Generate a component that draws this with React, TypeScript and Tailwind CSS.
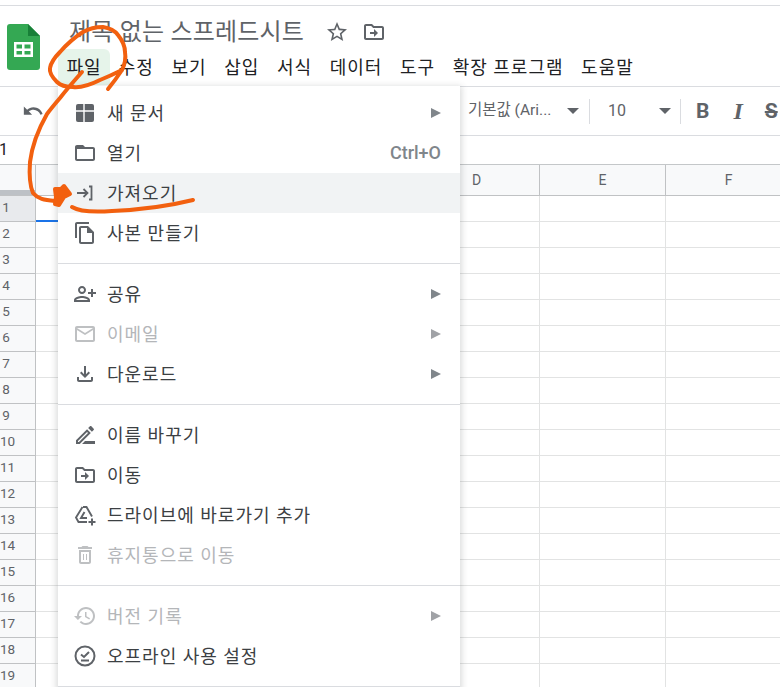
const FONT = "font-['Roboto','Noto_Sans_CJK_KR',sans-serif]";

function I({ d, className = "", size = 24, flip = false }: { d: string; className?: string; size?: number; flip?: boolean }) {
  return (
    <svg width={size} height={size} viewBox="0 0 24 24" fill="currentColor" className={className}>
      <path d={d} transform={flip ? "matrix(-1 0 0 1 24 0)" : undefined} />
    </svg>
  );
}

const P = {
  folder: "M20 6h-8l-2-2H4c-1.1 0-1.99.9-1.99 2L2 18c0 1.1.9 2 2 2h16c1.1 0 2-.9 2-2V8c0-1.1-.9-2-2-2zm0 12H4V8h16v10z",
  copy: "M16 1H4c-1.1 0-2 .9-2 2v14h2V3h12V1zm-1 4H8c-1.1 0-1.99.9-1.99 2L6 21c0 1.1.89 2 1.99 2H19c1.1 0 2-.9 2-2V11l-6-6zM8 21V7h6v5h5v9H8z",
  person: "M15 12c2.21 0 4-1.79 4-4s-1.79-4-4-4-4 1.79-4 4 1.79 4 4 4zm0-6c1.1 0 2 .9 2 2s-.9 2-2 2-2-.9-2-2 .9-2 2-2zm0 8c-2.67 0-8 1.34-8 4v2h16v-2c0-2.66-5.33-4-8-4zm-6 4c.22-.72 3.31-2 6-2 2.7 0 5.8 1.29 6 2H9zm-3-3v-3h3v-2H6V7H4v3H1v2h3v3h2z",
  mail: "M22 6c0-1.1-.9-2-2-2H4c-1.1 0-2 .9-2 2v12c0 1.1.9 2 2 2h16c1.1 0 2-.9 2-2V6zm-2 0l-8 5-8-5h16zm0 12H4V8l8 5 8-5v10z",
  download: "M18 15v3H6v-3H4v3c0 1.1.9 2 2 2h12c1.1 0 2-.9 2-2v-3h-2zm-1-4l-1.41-1.41L13 12.17V4h-2v8.17L8.41 9.59 7 11l5 5 5-5z",
  pencil: "M14.06 9.02l.92.92L5.92 19H5v-.92l9.06-9.06M17.66 3c-.25 0-.51.1-.7.29l-1.83 1.83 3.75 3.75 1.83-1.83c.39-.39.39-1.02 0-1.41l-2.34-2.34c-.2-.2-.45-.29-.71-.29zm-3.6 3.19L3 17.25V21h3.75L17.81 9.94l-3.75-3.75zM12 18h10v3H9z",
  move: "M20 6h-8l-2-2H4c-1.1 0-1.99.9-1.99 2L2 18c0 1.1.9 2 2 2h16c1.1 0 2-.9 2-2V8c0-1.1-.9-2-2-2zm0 12H4V6h5.17l2 2H20v10zm-8-4H8v-2h4V9l4 4-4 4v-3z",
  star: "M22 9.24l-7.19-.62L12 2 9.19 8.63 2 9.24l5.46 4.73L5.82 21 12 17.27 18.18 21l-1.63-7.03L22 9.24zM12 15.4l-3.76 2.27 1-4.28-3.32-2.88 4.38-.38L12 6.1l1.71 4.04 4.38.38-3.32 2.88 1 4.28L12 15.4z",
  trash: "M6 19c0 1.1.9 2 2 2h8c1.1 0 2-.9 2-2V7H6v12zM8 9h8v10H8V9zm7.5-5l-1-1h-5l-1 1H5v2h14V4zM10 11h1v6h-1zM13 11h1v6h-1z",
  history: "M13 3c-4.97 0-9 4.03-9 9H1l3.89 3.89.07.14L9 12H6c0-3.87 3.13-7 7-7s7 3.13 7 7-3.13 7-7 7c-1.93 0-3.68-.79-4.94-2.06l-1.42 1.42C8.27 19.99 10.51 21 13 21c4.97 0 9-4.03 9-9s-4.03-9-9-9zm-1 5v5l4.28 2.54.72-1.21-3.5-2.08V8H12z",
  undo: "M12.5 8c-2.65 0-5.05.99-6.9 2.6L2 7v9h9l-3.62-3.62c1.39-1.16 3.16-1.88 5.12-1.88 3.54 0 6.55 2.31 7.6 5.5l2.37-.78C21.08 11.03 17.15 8 12.5 8z",
};

function NewIcon() {
  return (
    <svg width={24} height={24} viewBox="0 0 24 24">
      <rect x="3" y="3" width="18" height="18" rx="2" fill="#5f6368" />
      <path d="M3 10h18M11 3v18" stroke="#fff" strokeWidth="1.4" fill="none" />
    </svg>
  );
}
function ImportIcon() {
  return (
    <svg width={24} height={24} viewBox="0 0 24 24" fill="none" stroke="#5f6368" strokeWidth="1.8">
      <path d="M4 12h10M10.5 8l4 4-4 4M16 5.500h2.500v13H16" />
    </svg>
  );
}
function ShortcutIcon() {
  return (
    <svg width={24} height={24} viewBox="0 0 24 24" fill="none" stroke="#5f6368" strokeWidth="1.9">
      <path d="M10 4h3.500L19 13.500M9.500 4 3 14.500 5.500 19H14" />
      <path d="M11.500 9 8 15h6" />
      <path d="M19 15.500v7M15.500 19h7" strokeWidth="2" />
    </svg>
  );
}
function OfflineIcon() {
  return (
    <svg width={24} height={24} viewBox="0 0 24 24" fill="none" stroke="#5f6368" strokeWidth="2">
      <circle cx="12" cy="12" r="9.500" />
      <path d="M8 10.500l3 2.500 5-5M8 16.500h8" />
    </svg>
  );
}

type Item = { label: string; icon: React.ReactNode; arrow?: boolean; shortcut?: string; disabled?: boolean; active?: boolean };

const groups: Item[][] = [
  [
    { label: "새 문서", icon: <NewIcon />, arrow: true },
    { label: "열기", icon: <I d={P.folder} />, shortcut: "Ctrl+O" },
    { label: "가져오기", icon: <ImportIcon />, active: true },
    { label: "사본 만들기", icon: <I d={P.copy} /> },
  ],
  [
    { label: "공유", icon: <I d={P.person} flip />, arrow: true },
    { label: "이메일", icon: <I d={P.mail} />, arrow: true, disabled: true },
    { label: "다운로드", icon: <I d={P.download} />, arrow: true },
  ],
  [
    { label: "이름 바꾸기", icon: <I d={P.pencil} /> },
    { label: "이동", icon: <I d={P.move} /> },
    { label: "드라이브에 바로가기 추가", icon: <ShortcutIcon /> },
    { label: "휴지통으로 이동", icon: <I d={P.trash} />, disabled: true },
  ],
  [
    { label: "버전 기록", icon: <I d={P.history} />, arrow: true, disabled: true },
    { label: "오프라인 사용 설정", icon: <OfflineIcon /> },
  ],
];

const menus = ["파일", "수정", "보기", "삽입", "서식", "데이터", "도구", "확장 프로그램", "도움말"];

function MenuRow({ item }: { item: Item }) {
  return (
    <div className={`flex h-10 items-center pl-[15px] pr-[19px] ${item.active ? "bg-[#f1f3f4]" : ""} ${item.disabled ? "text-[#b4b6b9]" : "text-[#3c4043]"}`}>
      <span className={`flex w-[34px] shrink-0 items-center ${item.disabled ? "opacity-40 text-[#5f6368]" : "text-[#5f6368]"}`}>{item.icon}</span>
      <span className="flex-1 pt-[2px] text-[18px] leading-none tracking-[1px]">{item.label}</span>
      {item.shortcut && <span className="text-[18px] font-medium leading-none text-[#80868b]">{item.shortcut}</span>}
      {item.arrow && (
        <span className={`h-0 w-0 border-y-[5px] border-l-[10px] border-y-transparent ${item.disabled ? "border-l-[#a0a2a6]" : "border-l-[#80868b]"}`} />
      )}
    </div>
  );
}

function Caret() {
  return <span className="block h-0 w-0 border-x-[6px] border-t-[6px] border-x-transparent border-t-[#5f6368]" />;
}

export default function App() {
  const rows = Array.from({ length: 19 }, (_, i) => i + 1);
  return (
    <div className={`relative h-[687px] w-[780px] overflow-hidden bg-white ${FONT}`}>
      <div className="h-[6px] border-b border-[#dadce0]" />

      {/* Header */}
      <div className="flex h-[81px] border-b border-[#dadce0]">
        <div className="ml-[7px] mt-[18px] w-[32px] shrink-0">
          <svg width="33" height="46" viewBox="0 0 33 46">
            <path d="M3 0h18l12 12v31a3 3 0 0 1-3 3H3a3 3 0 0 1-3-3V3a3 3 0 0 1 3-3z" fill="#34a853" />
            <path d="M21 0l12 12H21z" fill="#188038" />
            <path d="M7 18h19v15H7zM9.500 20.500v4h5.500v-4zm8 0v4H23.500v-4zm-8 6.500v3.500h5.500V27zm8 0v3.500h6V27z" fill="#fff" fillRule="evenodd" />
          </svg>
        </div>
        <div className="ml-[19px] flex min-w-0 flex-1 flex-col">
          <div className="mt-[9px] flex h-[34px] items-center pl-[11px]">
            <span className="text-[24px] leading-none tracking-[0.2px] text-[#5f6368]">제목 없는 스프레드시트</span>
            <I d={P.star} className="ml-[21px] text-[#5f6368]" />
            <I d={P.move} className="ml-[13px] text-[#5f6368]" />
          </div>
          <div className="flex items-start">
            {menus.map((m, i) => (
              <div key={m} className={`flex h-[36px] items-center rounded-t-[6px] pt-[2px] text-[18px] leading-none tracking-[1px] text-[#202124] ${i === 0 ? "w-[52px] justify-center bg-[#e6f4ea]" : "px-[8.8px]"}`}>
                {m}
              </div>
            ))}
          </div>
        </div>
      </div>

      {/* Toolbar */}
      <div className="flex h-[49px] items-center border-b border-[#dadce0] text-[#5f6368]">
        <I d={P.undo} size={22} className="ml-[22px]" />
        <span className="ml-[424px] w-[84px] whitespace-nowrap text-[15.5px] text-[#5f6368]">기본값 (Ari...</span>
        <span className="ml-[15px]"><Caret /></span>
        <span className="ml-[10px] h-[25px] w-px bg-[#dadce0]" />
        <span className="ml-[18px] w-[40px] text-[16px]">10</span>
        <span className="ml-[11px]"><Caret /></span>
        <span className="ml-[9px] h-[25px] w-px bg-[#dadce0]" />
        <span className="ml-[15px] text-[21px] font-bold leading-none">B</span>
        <span className="ml-[24px] font-['Liberation_Serif',serif] text-[24px] font-bold italic leading-none">I</span>
        <span className="ml-[22px] text-[21px] font-bold leading-none line-through">S</span>
      </div>

      {/* Formula bar */}
      <div className="flex h-[29px] items-center border-b border-[#c4c7c9] text-[16px] text-[#202124]">
        <span className="-ml-[1px]">1</span>
      </div>

      {/* Sheet */}
      <div className="flex h-[31px] border-b border-[#c0c2c4] bg-[#f8f9fa] text-[14px] text-[#5f6368]">
        <div className="flex h-full w-[36px] shrink-0 flex-col justify-end border-r border-[#c0c2c4]">
          <div className="h-[5px] bg-[#bdc1c6]" />
        </div>
        {["", "", "", "D", "E", "F"].map((c, i) => (
          <div key={i} className="flex h-full w-[126px] shrink-0 items-center justify-center border-r border-[#c0c2c4]">{c}</div>
        ))}
      </div>
      {rows.map((r) => (
        <div key={r} className="flex h-[26px]">
          <div className={`flex h-full w-[36px] shrink-0 items-center border-b border-r border-[#c0c2c4] pb-[2px] text-[13.5px] text-[#5f6368] ${r === 1 ? "bg-[#e8eaed]" : "bg-[#f8f9fa]"}`}>
            <span className="w-[12px] text-center">{r}</span>
          </div>
          {[0, 1, 2, 3, 4, 5].map((c) => (
            <div key={c} className="h-full w-[126px] shrink-0 border-b border-r border-[#e2e3e3]" />
          ))}
        </div>
      ))}
      <div className="absolute left-[36px] top-[220px] h-[2px] w-[126px] bg-[#1a73e8]" />

      {/* Dropdown menu */}
      <div className="absolute left-[58px] top-[86px] h-[610px] w-[402px] bg-white pt-[7px] shadow-[0_2px_6px_2px_rgba(60,64,67,0.18)]">
        {groups.map((g, i) => (
          <div key={i} className={i > 0 ? "mt-[10px] border-t border-[#dadce0] pt-[10px]" : ""}>
            {g.map((it) => <MenuRow key={it.label} item={it} />)}
          </div>
        ))}
        <div className="mt-[10px] border-t border-[#dadce0]" />
      </div>

      {/* Hand-drawn orange annotation */}
      <svg className="pointer-events-none absolute left-0 top-0" width="780" height="687" fill="none" stroke="#f2600f" strokeWidth="4" strokeLinecap="round" strokeLinejoin="round">
        <path d="M108 89C113 83 118 76 122 70C112 75 105 78 100 80C90 85 81 88 73 87C65 87 60 85 57 82C52 77 49 73 50 68C51 62 55 57 60 52C67 44 75 37 83 32C90 28 97 27 103 27C110 28 115 31 118 35C122 40 125 46 125 52C126 58 125 64 122 70" />
        <path d="M82 72C74 81 67 89 60 98C54 105 50 110 47 114C39 128 32 146 30 162C29 176 30 186 33 193C38 199 44 200 55 201" />
        <path d="M55 189L61 189L64 186L70 194L64 197L59 205L55 204L56 197Z" fill="#f2600f" />
        <path d="M72 207C80 212 98 212 112 211C135 210 165 207 193 200" />
      </svg>
    </div>
  );
}
